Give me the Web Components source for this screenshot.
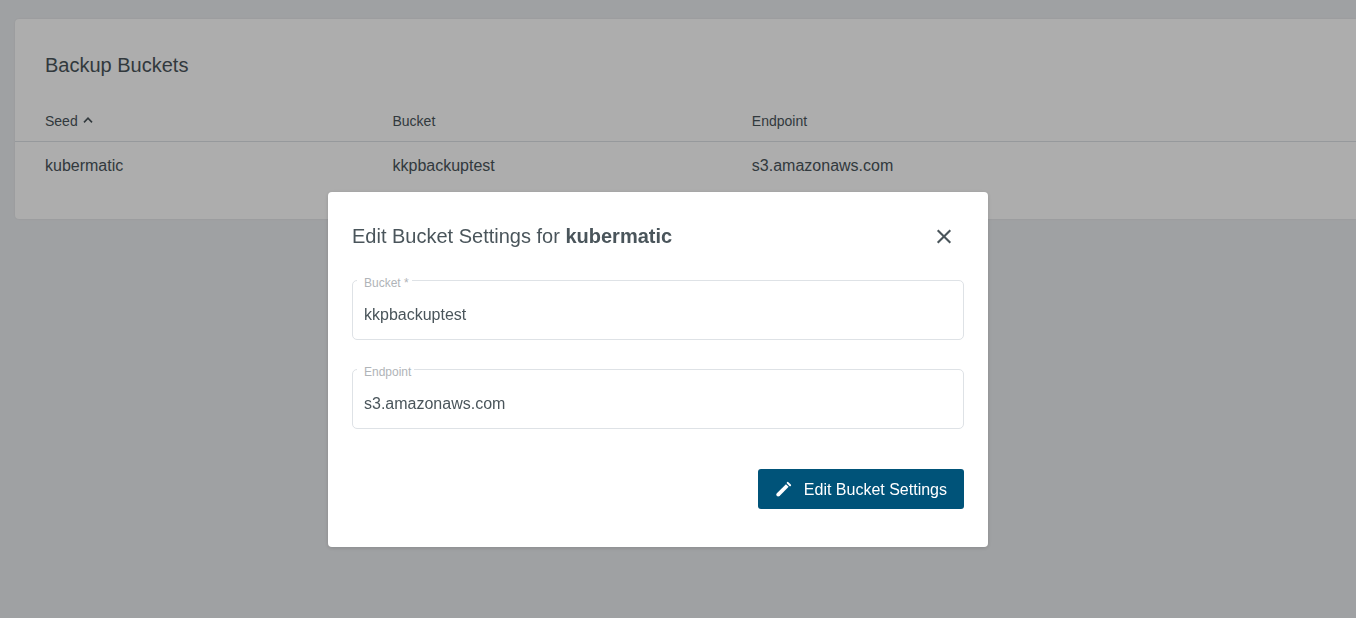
<!DOCTYPE html>
<html lang="en">
<head>
<meta charset="utf-8">
<meta name="viewport" content="width=device-width, initial-scale=1">
<title>Backup Buckets</title>
<style>
  :root {
    --text: #4a555b;
    --muted: #b0b4b8;
    --line: #dee2e6;
    --primary: #005379;
  }
  body {
    margin: 0;
    min-height: 100vh;
    background: #ebedf0;
    color: var(--text);
    font: 16px/24px "Liberation Sans", Arial, sans-serif;
    overflow: hidden;
  }
</style>
</head>
<body>
<buckets-app></buckets-app>

<script>
  const render = (host, html) => {
    const template = document.createElement('template');
    template.innerHTML = html;
    host.attachShadow({ mode: 'open' }).append(template.content.cloneNode(true));
  };

  customElements.define('content-card', class extends HTMLElement {
    constructor() {
      super();
      render(this, `
        <style>
          :host {
            display: block;
            padding: 34px 0 29px;
            background: #fff;
            border-radius: 4px 0 0 4px;
            box-shadow: 0 0 2px rgba(0, 0, 0, .08);
          }
          h1 { margin: 0 30px 24px; font-size: 20px; font-weight: 400; line-height: 24px; }
        </style>
        <h1><slot name="title"></slot></h1>
        <slot></slot>`);
    }
  });

  customElements.define('bucket-table', class extends HTMLElement {
    constructor() {
      super();
      render(this, `
        <style>
          :host { display: block; }
          table { width: 100%; table-layout: fixed; border-collapse: separate; border-spacing: 0; }
          .seed { width: 28.15%; }
          .bucket { width: 26.8%; }
          th, td { padding: 0; text-align: left; font-weight: 400; }
          th { height: 40px; font-size: 14px; border-bottom: 1px solid var(--line); }
          td { height: 48px; }
          th:first-child, td:first-child { padding-left: 30px; }
          button {
            display: inline-flex; align-items: center; gap: 5px;
            padding: 0; border: 0; background: none; color: inherit; font: inherit;
          }
        </style>
        <table>
          <colgroup><col class="seed"><col class="bucket"><col></colgroup>
          <thead>
            <tr>
              <th scope="col" aria-sort="ascending"><button type="button">Seed
                <svg width="10" height="10" viewBox="0 0 10 10" fill="none" stroke="currentColor" stroke-width="1.6" aria-hidden="true"><path d="M1 6.4 5 2.2l4 4.2"/></svg>
              </button></th>
              <th scope="col">Bucket</th>
              <th scope="col">Endpoint</th>
            </tr>
          </thead>
          <tbody>
            <tr><td>kubermatic</td><td>kkpbackuptest</td><td>s3.amazonaws.com</td></tr>
          </tbody>
        </table>`);
    }
  });

  customElements.define('outlined-field', class extends HTMLElement {
    constructor() {
      super();
      render(this, `
        <style>
          :host { display: block; position: relative; }
          input {
            display: block; box-sizing: border-box; width: 100%; height: 60px;
            margin: 0; padding: 10px 11px 0; border: 1px solid var(--line); border-radius: 5px;
            outline: 0; background: #fff; color: inherit; font: inherit;
          }
          label {
            position: absolute; top: -5px; left: 5px;
            padding: 0 3px 0 7px; background: #fff;
            color: var(--muted); font-size: 12px; line-height: 16px;
          }
        </style>
        <label for="control"></label>
        <input id="control" type="text">`);
      const input = this.shadowRoot.querySelector('input');
      input.required = this.hasAttribute('required');
      input.value = this.getAttribute('value') || '';
      this.shadowRoot.querySelector('label').textContent =
        this.getAttribute('label') + (input.required ? ' *' : '');
    }
  });

  customElements.define('primary-button', class extends HTMLElement {
    constructor() {
      super();
      render(this, `
        <style>
          :host { display: block; }
          button {
            display: flex; align-items: center; gap: 8px; height: 40px;
            padding: 2px 17px 0 14px; border: 0; border-radius: 3px;
            background: var(--primary); color: #fff; font: inherit;
          }
        </style>
        <button type="button"><slot name="icon"></slot><slot></slot></button>`);
    }
  });

  customElements.define('modal-dialog', class extends HTMLElement {
    constructor() {
      super();
      render(this, `
        <style>
          :host {
            position: fixed; inset: 0; display: flex;
            justify-content: center; align-items: flex-start;
            padding: 192px 40px 0 0; background: rgba(0, 0, 0, .32);
          }
          section {
            box-sizing: border-box; width: 660px; max-width: 100%;
            padding: 24px 24px 38px; border-radius: 4px; background: #fff;
            box-shadow: 0 1px 4px rgba(0, 0, 0, .15);
          }
          header { display: flex; align-items: center; justify-content: space-between; margin-bottom: 24px; }
          h2 { margin: 0; font-size: 20px; font-weight: 400; line-height: 24px; }
          .close {
            display: grid; place-items: center; width: 40px; height: 40px;
            padding: 0; border: 0; background: none; color: inherit;
          }
          .fields { display: grid; gap: 29px; }
          footer { display: flex; justify-content: flex-end; margin-top: 40px; }
        </style>
        <section role="dialog" aria-modal="true" aria-labelledby="heading">
          <header>
            <h2 id="heading"><slot name="title"></slot></h2>
            <button class="close" type="button" aria-label="Close">
              <svg width="24" height="24" viewBox="0 0 24 24" fill="none" stroke="currentColor" stroke-width="2.1" aria-hidden="true"><path d="m5.7 6.2 12.6 12.6M18.3 6.2 5.7 18.8"/></svg>
            </button>
          </header>
          <div class="fields"><slot></slot></div>
          <footer><slot name="actions"></slot></footer>
        </section>`);
    }
  });

  customElements.define('buckets-app', class extends HTMLElement {
    constructor() {
      super();
      render(this, `
        <style>
          :host { display: block; }
          main { padding: 19px 0 0 15px; }
        </style>
        <main>
          <content-card>
            <span slot="title">Backup Buckets</span>
            <bucket-table></bucket-table>
          </content-card>
        </main>
        <modal-dialog>
          <span slot="title">Edit Bucket Settings for <b>kubermatic</b></span>
          <outlined-field label="Bucket" value="kkpbackuptest" required></outlined-field>
          <outlined-field label="Endpoint" value="s3.amazonaws.com"></outlined-field>
          <primary-button slot="actions">
            <svg slot="icon" width="24" height="24" viewBox="0 0 24 24" fill="none" stroke="#fff" aria-hidden="true">
              <path d="M6.2 16.6 15.3 7.500" stroke-width="3.8"/>
              <path d="M6.200 16.600h.01" stroke-width="3.8" stroke-linecap="round"/>
              <path d="m15.700 4.900 2.400 2.400" stroke-width="2" stroke-linecap="round"/>
            </svg>
            Edit Bucket Settings
          </primary-button>
        </modal-dialog>`);
    }
  });
</script>
</body>
</html>
